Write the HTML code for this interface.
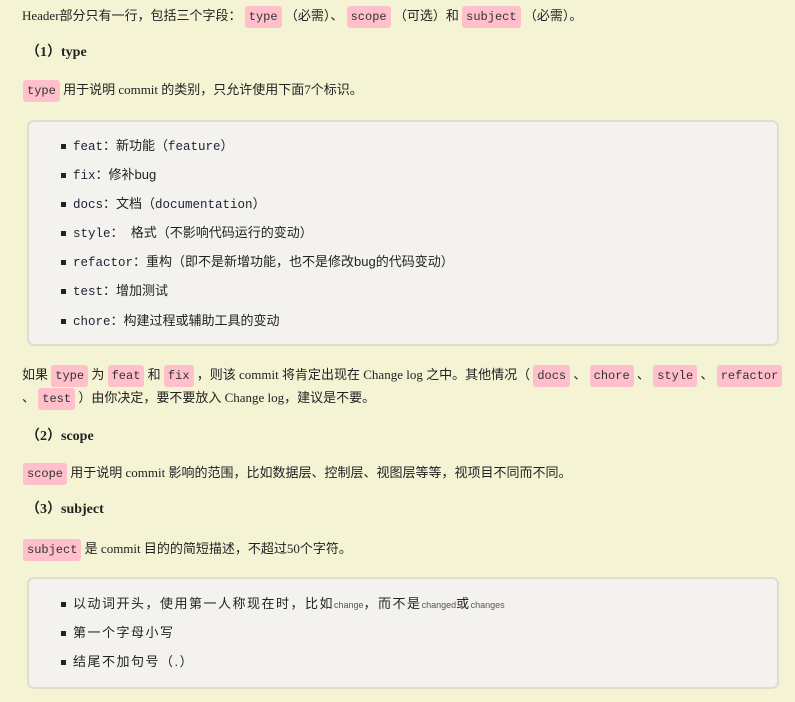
<!DOCTYPE html>
<html><head><meta charset="utf-8"><style>
body{margin:0;background:#f4f3d4;width:795px;height:702px;position:relative;overflow:hidden;font-family:"Liberation Serif","Noto Sans CJK SC",serif;font-size:13px;color:#222}
.l{position:absolute;white-space:nowrap;line-height:24px}
code{font-family:"Liberation Mono",monospace;font-size:12px;background:#ffc0cb;border-radius:3px;padding:4px 4px;color:#333}
.h{font-weight:bold;font-size:14px}
.box{position:absolute;left:27px;width:748px;background:#f4f2ee;border:2px solid #e0ddcf;border-radius:7px}
.li{position:absolute;left:44px;white-space:nowrap;line-height:20px;font-family:"Liberation Sans","Noto Sans CJK SC",sans-serif;font-size:13px;color:#222}
.li:before{content:"";position:absolute;left:-12px;top:8px;width:5px;height:5px;background:#222}
.li tt{font-family:"Liberation Mono",monospace;font-size:12.5px;color:#223}
.b2 .li{letter-spacing:1.5px}
small{font-size:9px;color:#555;letter-spacing:0}
</style></head><body>
<div class="l" style="left:22px;top:4px">Header部分只有一行，包括三个字段： <code>type</code> （必需）、 <code>scope</code> （可选）和 <code>subject</code> （必需）。</div>
<div class="l h" style="left:26px;top:41px">（1）type</div>
<div class="l" style="left:23px;top:78px"><code>type</code> 用于说明 commit 的类别，只允许使用下面7个标识。</div>
<div class="box" style="top:120px;height:222px">
<div class="li" style="top:14px"><tt>feat</tt>：新功能（<tt>feature</tt>）</div>
<div class="li" style="top:43px"><tt>fix</tt>：修补bug</div>
<div class="li" style="top:72px"><tt>docs</tt>：文档（<tt>documentation</tt>）</div>
<div class="li" style="top:101px"><tt>style</tt>：&nbsp; 格式（不影响代码运行的变动）</div>
<div class="li" style="top:130px"><tt>refactor</tt>：重构（即不是新增功能，也不是修改bug的代码变动）</div>
<div class="li" style="top:159px"><tt>test</tt>：增加测试</div>
<div class="li" style="top:189px"><tt>chore</tt>：构建过程或辅助工具的变动</div>
</div>
<div class="l" style="left:22px;top:363px">如果 <code>type</code> 为 <code>feat</code> 和 <code>fix</code> ，则该 commit 将肯定出现在 Change log 之中。其他情况（ <code>docs</code> 、 <code>chore</code> 、 <code>style</code> 、 <code>refactor</code></div>
<div class="l" style="left:22px;top:386px">、 <code>test</code> ）由你决定，要不要放入 Change log，建议是不要。</div>
<div class="l h" style="left:26px;top:425px">（2）scope</div>
<div class="l" style="left:23px;top:461px"><code>scope</code> 用于说明 commit 影响的范围，比如数据层、控制层、视图层等等，视项目不同而不同。</div>
<div class="l h" style="left:26px;top:498px">（3）subject</div>
<div class="l" style="left:23px;top:537px"><code>subject</code> 是 commit 目的的简短描述，不超过50个字符。</div>
<div class="box b2" style="top:577px;height:108px">
<div class="li" style="top:15px">以动词开头，使用第一人称现在时，比如<small>change</small>，而不是<small>changed</small>或<small>changes</small></div>
<div class="li" style="top:44px">第一个字母小写</div>
<div class="li" style="top:73px">结尾不加句号（.）</div>
</div>
</body></html>
